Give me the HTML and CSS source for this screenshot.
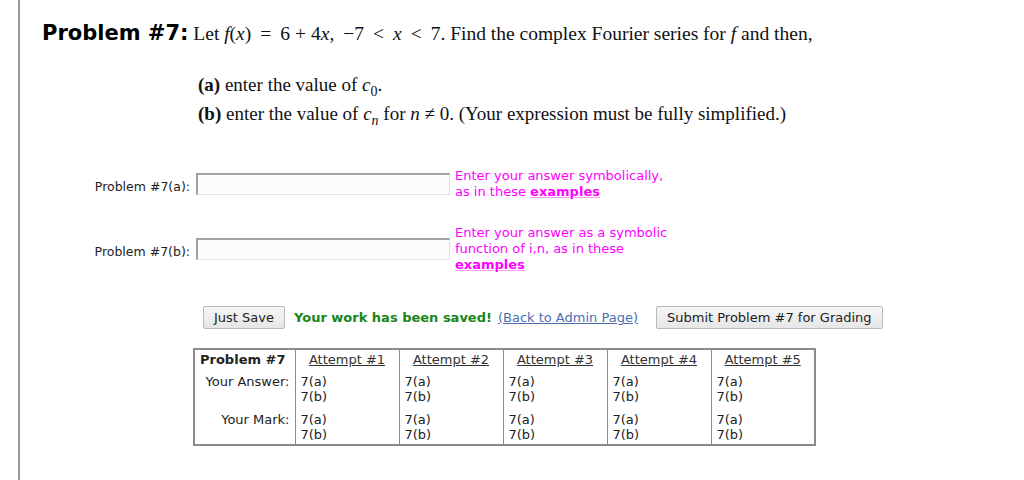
FILE: index.html
```html
<!DOCTYPE html>
<html lang="en">

<head>
    <meta charset="UTF-8">
    <title>Problem #7</title>
    <link rel="stylesheet" href="styles.css">
</head>

<body>
    <div class="page">
        <!-- Problem statement -->
        <div class="problem">
            <p class="statement"><span class="prob-label">Problem #7:</span> Let <i>f</i>(<i>x</i>)<span class="rel">=</span>6<span class="bin">+</span>4<i>x</i>,<span class="sep"></span>&minus;7<span class="rel">&lt;</span><i>x</i><span class="rel">&lt;</span>7. Find the complex Fourier series for <i>f</i> and then,</p>
            <div class="parts">
                <div class="part"><b>(a)</b> enter the value of <i>c</i><sub>0</sub>.</div>
                <div class="part"><b>(b)</b> enter the value of <i>c<sub>n</sub></i> for <i>n</i> &ne; 0. (Your expression must be fully simplified.)</div>
            </div>
        </div>

        <!-- Answer inputs -->
        <div class="answers">
            <div class="answer-row">
                <label for="ans-a">Problem #7(a):</label>
                <input type="text" id="ans-a" class="answer-box">
                <div class="hint">Enter your answer symbolically,<br>as in these <a href="#" class="hint-link">examples</a></div>
            </div>
            <div class="answer-row">
                <label for="ans-b">Problem #7(b):</label>
                <input type="text" id="ans-b" class="answer-box">
                <div class="hint">Enter your answer as a symbolic<br>function of i,n, as in these<br><a href="#" class="hint-link">examples</a></div>
            </div>
        </div>

        <!-- Save / submit -->
        <div class="actions">
            <button class="btn">Just Save</button>
            <span class="saved">Your work has been saved!</span>
            <a href="#" class="admin-link">(Back to Admin Page)</a>
            <button class="btn submit-btn">Submit Problem #7 for Grading</button>
        </div>

        <!-- Attempts table -->
        <table class="attempts">
            <colgroup>
                <col class="label-col">
                <col class="try-col">
                <col class="try-col">
                <col class="try-col">
                <col class="try-col">
                <col class="try-col">
            </colgroup>
            <tr class="head">
                <td class="row-label"><b>Problem #7</b></td>
                <td><a href="#">Attempt #1</a></td>
                <td><a href="#">Attempt #2</a></td>
                <td><a href="#">Attempt #3</a></td>
                <td><a href="#">Attempt #4</a></td>
                <td><a href="#">Attempt #5</a></td>
            </tr>
            <tr class="answer">
                <td class="row-label right">Your Answer:</td>
                <td>7(a)<br>7(b)</td>
                <td>7(a)<br>7(b)</td>
                <td>7(a)<br>7(b)</td>
                <td>7(a)<br>7(b)</td>
                <td>7(a)<br>7(b)</td>
            </tr>
            <tr class="mark">
                <td class="row-label right">Your Mark:</td>
                <td>7(a)<br>7(b)</td>
                <td>7(a)<br>7(b)</td>
                <td>7(a)<br>7(b)</td>
                <td>7(a)<br>7(b)</td>
                <td>7(a)<br>7(b)</td>
            </tr>
        </table>
    </div>
</body>

</html>
```

FILE: styles.css
```css
body, html {
    margin: 0;
    background: #ffffff;
    font-family: "DejaVu Sans", Verdana, sans-serif;
    color: #222;
}

/* Left rule running down the page */
.page {
    margin-left: 18px;
    border-left: 2px solid #9a9a9a;
    min-height: 100vh;
    padding-left: 22px;
    padding-top: 20px;
    box-sizing: border-box;
}

/* Problem statement */
.statement {
    margin: 0;
    font-family: "Liberation Serif", "Times New Roman", serif;
    font-size: 19.5px;
    line-height: 26px;
    color: #111;
}

.prob-label {
    font-family: "DejaVu Sans", Verdana, sans-serif;
    font-weight: bold;
    font-size: 21px;
    color: #000;
}

.rel {
    margin: 0 9px;
}

.bin {
    margin: 0 5px;
}

.sep {
    margin-left: 9px;
}

.parts {
    margin: 23px 0 0 156px;
    font-family: "Liberation Serif", "Times New Roman", serif;
    font-size: 19px;
    color: #111;
}

.part {
    line-height: 29px;
}

.part sub {
    font-size: 14px;
    line-height: 0;
}

/* Answer rows */
.answers {
    margin-top: 40px;
    display: flex;
    flex-direction: column;
    gap: 25px;
}

.answer-row {
    display: grid;
    grid-template-columns: 148px 253px auto;
    column-gap: 6px;
    align-items: center;
}

.answer-row label {
    text-align: right;
    font-size: 12.5px;
    padding-top: 5px;
    color: #222;
}

.answer-box {
    box-sizing: border-box;
    width: 254px;
    height: 22px;
    margin: 0;
    border-top: 2px solid #a2a2a2;
    border-left: 2px solid #a2a2a2;
    border-bottom: 1px solid #e2e2e2;
    border-right: 1px solid #e2e2e2;
    background: #fcfcfc;
}

.hint {
    font-size: 13px;
    line-height: 16px;
    color: #ff00ff;
}

.hint-link {
    color: #ff00ff;
    font-weight: bold;
    text-decoration-color: #f59cf5;
}

/* Save / submit row */
.actions {
    display: flex;
    align-items: center;
    margin: 33px 0 0 161px;
    font-size: 13px;
}

.btn {
    font-family: "DejaVu Sans", Verdana, sans-serif;
    font-size: 13px;
    color: #222;
    height: 23px;
    padding: 0 10px;
    background: linear-gradient(#f6f6f6, #e6e6e6);
    border: 1px solid #b9b9b9;
    border-radius: 2px;
}

.saved {
    margin-left: 9px;
    font-weight: bold;
    font-size: 13px;
    color: #188518;
}

.admin-link {
    margin-left: 6px;
    color: #4a6fb0;
}

.submit-btn {
    margin-left: 18px;
}

/* Attempts table */
.attempts {
    margin: 19px 0 0 151px;
    width: 620px;
    table-layout: fixed;
    border-collapse: collapse;
    border: 2px solid #8c8c8c;
    font-size: 13px;
    line-height: 15px;
    color: #222;
}

.label-col {
    width: 101px;
}

.try-col {
    width: 104px;
}

.attempts td {
    border-left: 1px solid #8c8c8c;
    padding: 2px 5px;
    vertical-align: top;
}

.attempts .head td {
    text-align: center;
    padding-bottom: 5px;
}

.attempts .head td.row-label {
    text-align: left;
    white-space: nowrap;
}

.attempts a {
    color: #333;
}

.attempts .right {
    text-align: right;
}

.attempts .mark td {
    padding-top: 6px;
}
```
